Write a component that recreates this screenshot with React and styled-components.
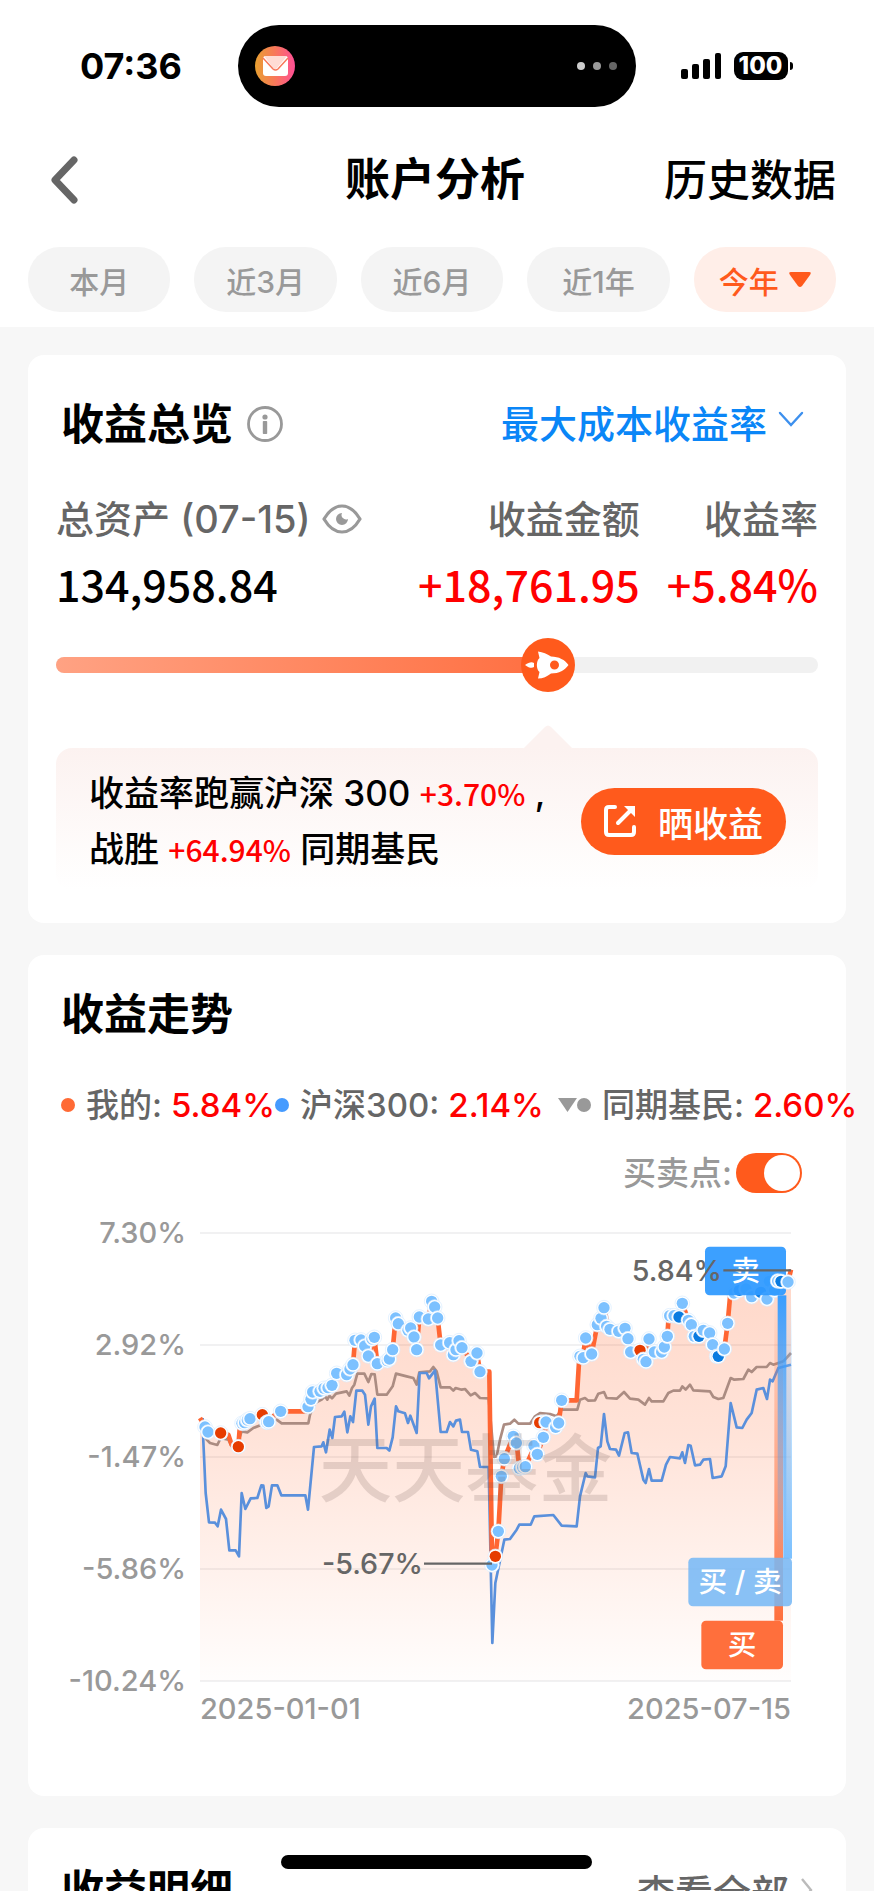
import React, { useState } from 'react';
import styled, { createGlobalStyle } from 'styled-components';

const GlobalStyle = createGlobalStyle`
  * {
    box-sizing: border-box;
  }

  body {
    margin: 0;
    background: #f7f7f7;
    font-family: Inter, 'Noto Sans CJK SC', sans-serif;
    font-weight: 500;
    color: #000;
  }

  button,
  select {
    margin: 0;
    padding: 0;
    border: 0;
    background: none;
    font-family: inherit;
    font-weight: inherit;
    cursor: pointer;
  }
`;

const Screen = styled.div`
  position: relative;
  height: 100vh;
  overflow: hidden;
`;

const Top = styled.header`
  background: #fff;
`;

const StatusBar = styled.div`
  display: grid;
  grid-template-columns: 1fr 398px 1fr;
  align-items: center;
  height: 132px;
`;

const Clock = styled.div`
  padding-left: 24px;
  text-align: center;
  font-size: 36px;
  font-weight: 700;
`;

const Island = styled.div`
  display: flex;
  align-items: center;
  justify-content: space-between;
  height: 82px;
  padding: 0 18px 0 17px;
  border-radius: 41px;
  background: #000;
`;

const Signals = styled.div`
  display: flex;
  align-items: center;
  justify-content: center;
  gap: 12px;
  padding-right: 42px;
`;

const Battery = styled.div`
  position: relative;
  width: 54px;
  height: 28px;
  border-radius: 9px;
  background: #000;
  color: #fff;
  font-size: 24px;
  font-weight: 800;
  line-height: 28px;
  text-align: center;

  &::after {
    content: '';
    position: absolute;
    right: -5px;
    top: 10px;
    width: 3px;
    height: 8px;
    border-radius: 0 4px 4px 0;
    background: #000;
  }
`;

const NavBar = styled.nav`
  display: grid;
  grid-template-columns: 1fr auto 1fr;
  align-items: center;
  height: 96px;
  padding: 0 38px 0 34px;
`;

const BackButton = styled.button`
  display: flex;
  width: 60px;
  padding-left: 16px;
`;

const PageTitle = styled.h1`
  margin: 0;
  font-size: 45px;
  font-weight: 600;
  line-height: 64px;
`;

const NavLink = styled.a`
  justify-self: end;
  color: #000;
  font-size: 43px;
  line-height: 64px;
  text-decoration: none;
`;

const Tabs = styled.div`
  display: flex;
  gap: 24px;
  padding: 19px 38px 15px 28px;
`;

const Tab = styled.button`
  display: flex;
  flex: 1;
  align-items: center;
  justify-content: center;
  gap: 10px;
  height: 65px;
  border-radius: 32px;
  background: ${props => (props.$active ? '#ffeee8' : '#f4f4f4')};
  color: ${props => (props.$active ? '#ff5a1c' : '#999')};
  font-size: 30px;
`;

const Content = styled.main`
  display: flex;
  flex-direction: column;
  gap: 32px;
  padding: 28px;
`;

const Card = styled.section`
  padding: ${props => props.$top}px 28px ${props => props.$bottom}px;
  border-radius: 16px;
  background: #fff;
`;

const CardHead = styled.div`
  display: flex;
  align-items: center;
  justify-content: space-between;
  padding: 0 ${props => (props.$wide ? 5 : 14)}px 0 5px;
`;

const CardTitle = styled.h2`
  display: flex;
  align-items: center;
  gap: 14px;
  margin: 0;
  font-size: 43px;
  font-weight: 700;
  line-height: 62px;
`;

const Picker = styled.label`
  display: flex;
  align-items: center;
  gap: 10px;
`;

const PickerSelect = styled.select`
  appearance: none;
  color: #0a86f7;
  font-size: 38px;
  line-height: 52px;
`;

const MoreLink = styled.a`
  display: flex;
  align-items: center;
  gap: 12px;
  color: #666;
  font-size: 38px;
  text-decoration: none;
`;

const Metrics = styled.div`
  display: grid;
  grid-template-columns: 1fr auto auto;
  gap: 27px;
  margin-top: 38px;
`;

const Metric = styled.div`
  display: flex;
  flex-direction: column;
  gap: 8px;
  align-items: ${props => (props.$right ? 'flex-end' : 'flex-start')};
`;

const MetricLabel = styled.div`
  display: flex;
  align-items: center;
  gap: 12px;
  color: #666;
  font-size: 38px;
  line-height: 52px;
  white-space: nowrap;
`;

const MetricValue = styled.div`
  color: ${props => (props.$up ? '#f00' : '#000')};
  font-family: 'Noto Sans CJK SC', sans-serif;
  font-size: 43px;
  line-height: 60px;
`;

const Track = styled.div`
  position: relative;
  height: 16px;
  margin-top: 44px;
  border-radius: 8px;
  background: #f1f1f1;
`;

const TrackFill = styled.div`
  height: 16px;
  border-radius: 8px;
  background: linear-gradient(90deg, #ffa283, #ff6f41);
`;

const Knob = styled.div`
  position: absolute;
  top: -19px;
  width: 54px;
  height: 54px;
  margin-left: -27px;
  border-radius: 50%;
  background: #ff5a1c;
`;

const Bubble = styled.div`
  position: relative;
  display: flex;
  align-items: center;
  justify-content: space-between;
  margin-top: 75px;
  padding: 17px 32px 13px 33px;
  border-radius: 16px;
  background: linear-gradient(#fcf2f0, #fff);
`;

const BubbleArrow = styled.svg`
  position: absolute;
  top: -23px;
  margin-left: -24px;
`;

const BubbleText = styled.p`
  margin: 0;
  font-size: 35px;
  line-height: 56px;
`;

const Up = styled.span`
  color: #f00;
  font-family: 'Noto Sans CJK SC', sans-serif;
  font-size: 30px;
  line-height: 1;
`;

const ShareButton = styled.button`
  display: flex;
  align-items: center;
  justify-content: center;
  gap: 22px;
  width: 205px;
  height: 67px;
  border-radius: 34px;
  background: #ff5a1c;
  color: #fff;
  font-size: 35px;
`;

const Legend = styled.div`
  display: flex;
  align-items: center;
  margin: 37px -28px 0 5px;
  color: #666;
  font-size: 33px;
  line-height: 46px;
  white-space: nowrap;

  svg {
    flex-shrink: 0;
  }
`;

const LegendItem = styled.div`
  display: flex;
  align-items: center;
  gap: 9px;
  margin-right: ${props => props.$after || 0}px;
`;

const Dot = styled.span`
  width: 14px;
  height: 14px;
  margin-right: 2px;
  border-radius: 50%;
  background: ${props => props.$color};
`;

const Percent = styled.span`
  color: #f00;
`;

const SwitchRow = styled.label`
  display: flex;
  align-items: center;
  justify-content: flex-end;
  gap: 4px;
  margin: 25px 16px 0 0;
  color: #999;
  font-size: 33px;
  line-height: 40px;
`;

const Switch = styled.input`
  appearance: none;
  width: 66px;
  height: 40px;
  margin: 0;
  padding: 2px;
  border-radius: 20px;
  background: ${props => (props.checked ? '#ff5a1c' : '#ccc')};
  cursor: pointer;

  &::before {
    content: '';
    display: block;
    width: 36px;
    height: 36px;
    margin-left: ${props => (props.checked ? 'auto' : 0)};
    border-radius: 50%;
    background: #fff;
  }
`;

const ChartGrid = styled.div`
  display: grid;
  grid-template-columns: 130px 1fr;
  column-gap: 14px;
  margin: 24px 27px 0 0;
  color: #999;
  font-size: 29px;
  line-height: 32px;
`;

const YAxis = styled.div`
  display: flex;
  flex-direction: column;
  justify-content: space-between;
  text-align: right;
`;

const Plot = styled.svg`
  display: block;
  width: 100%;
  margin: 16px 0;
  overflow: visible;
`;

const XAxis = styled.div`
  display: flex;
  grid-column: 2;
  justify-content: space-between;
  margin-top: -4px;
`;

const HomeBar = styled.div`
  position: absolute;
  bottom: 22px;
  left: 50%;
  width: 311px;
  height: 14px;
  margin-left: -156px;
  border-radius: 7px;
  background: #000;
`;

const progress = 64.6;

const mine = '0,555 15,580 22,597 62,600 85,605 95,635 115,641 120,575 130,568 150,558 187,545 205,566 225,545 242,535 320,535 324,521 333,499 338,477 360,473 378,465 395,457 410,421 440,425 459,395 465,322 485,325 505,369 523,313 532,392 565,378 578,350 587,255 595,272 630,285 642,312 650,350 658,252 685,258 695,205 704,222 713,255 722,336 745,330 760,355 777,322 786,344 815,385 831,360 840,416 868,416 876,990 886,970 895,895 904,730 913,677 940,610 950,630 958,705 976,702 1004,640 1012,664 1030,613 1040,568 1065,580 1076,570 1085,502 1130,502 1138,372 1148,372 1157,315 1175,363 1192,275 1203,256 1212,224 1225,283 1258,295 1275,286 1284,318 1292,357 1320,352 1338,386 1347,318 1363,357 1385,357 1393,342 1402,310 1406,250 1437,252 1447,211 1465,262 1474,275 1490,310 1510,297 1528,300 1538,335 1555,370 1573,348 1583,271 1592,170 1640,165 1655,190 1680,178 1700,198 1730,145 1764,147 1773,110';

const index300 = '8,555 10,625 17,780 27,868 45,869 53,880 63,830 78,858 88,952 107,952 117,970 125,780 136,828 152,796 172,795 184,757 190,758 199,825 206,820 216,757 232,757 244,787 316,787 324,830 342,642 365,640 370,628 378,658 389,590 397,615 405,552 425,550 433,536 442,598 451,550 459,567 469,473 487,473 495,485 505,575 513,520 524,497 532,645 560,645 568,653 578,613 588,520 595,535 615,541 624,570 631,548 650,600 659,420 680,420 687,436 705,412 722,597 740,597 750,567 760,580 768,563 780,560 786,597 804,597 813,650 832,655 840,702 866,702 877,1230 886,1050 913,920 930,918 950,890 958,875 992,875 1003,850 1060,846 1085,878 1130,880 1140,790 1157,720 1162,730 1185,733 1194,645 1202,640 1212,543 1222,625 1230,648 1248,650 1257,668 1274,600 1284,598 1295,660 1312,662 1330,740 1337,750 1347,708 1355,743 1385,743 1398,695 1410,672 1440,676 1447,658 1455,690 1465,636 1472,638 1485,697 1500,695 1510,680 1530,678 1538,735 1565,730 1577,700 1592,510 1610,583 1627,585 1640,560 1655,540 1670,470 1690,465 1701,498 1710,440 1718,445 1735,405 1773,395';

const peers = '0,580 20,620 30,630 52,636 62,615 85,620 95,640 115,625 125,595 142,598 160,585 185,575 230,560 245,571 325,571 330,545 345,510 365,500 375,490 382,500 388,488 396,496 408,482 440,475 448,488 456,465 463,455 472,422 493,422 505,447 514,423 524,424 532,485 560,485 578,460 588,422 620,430 640,435 650,455 658,418 690,415 700,402 710,415 722,463 750,463 760,473 767,465 785,470 795,468 812,487 825,480 840,495 866,496 882,672 890,670 900,620 912,575 930,572 943,560 955,572 990,572 1005,550 1020,540 1050,543 1070,550 1085,530 1132,530 1140,500 1155,495 1165,503 1185,502 1195,482 1212,477 1220,495 1250,497 1272,477 1290,497 1315,500 1335,515 1347,495 1355,505 1390,505 1405,480 1420,473 1440,473 1447,460 1457,470 1470,455 1480,472 1530,475 1540,492 1555,498 1570,495 1592,435 1603,440 1630,438 1645,410 1655,417 1670,402 1700,402 1710,390 1720,395 1750,385 1773,360';

const markerColors = { both: '#7cc1ff', buy: '#e63c00', sell: '#0a7be0' };

const markers = [
  [15, 582], [24, 597], [62, 600, 'buy'], [115, 641, 'buy'], [126, 571], [134, 569], [142, 561], [150, 557],
  [187, 545, 'buy'], [200, 568], [206, 566], [242, 535], [324, 521], [333, 499], [338, 477], [360, 475],
  [372, 466], [384, 464], [396, 457], [410, 421], [440, 425], [450, 408], [459, 395], [465, 322], [483, 321],
  [494, 339], [505, 369], [516, 318], [523, 313], [532, 392], [562, 383], [568, 378], [578, 350], [587, 255],
  [595, 272], [624, 292], [632, 285], [642, 312], [650, 350], [658, 252], [685, 258], [695, 205], [704, 222],
  [713, 255], [722, 336], [749, 329], [760, 365], [768, 350], [777, 323], [786, 344], [813, 385], [831, 360],
  [840, 416], [876, 996], [886, 970, 'buy'], [895, 895], [904, 730], [913, 677], [940, 610], [949, 630],
  [958, 706], [968, 703], [976, 701], [1002, 638], [1012, 664], [1030, 613], [1019, 569, 'buy'], [1038, 567],
  [1067, 583], [1076, 570], [1085, 502], [1140, 370], [1150, 374], [1157, 315], [1175, 363], [1192, 275],
  [1203, 256], [1212, 224], [1220, 280], [1230, 289], [1256, 295], [1275, 286], [1284, 317], [1292, 357],
  [1320, 352, 'buy'], [1330, 379], [1338, 386], [1347, 318], [1363, 357], [1385, 357], [1393, 342], [1402, 310],
  [1409, 248], [1422, 248], [1437, 252, 'sell'], [1447, 211], [1465, 262], [1474, 275], [1483, 310],
  [1497, 310, 'sell'], [1510, 292], [1529, 300], [1538, 335], [1550, 370], [1555, 370, 'sell'], [1573, 348],
  [1583, 271], [1602, 180], [1618, 172, 'sell'], [1638, 168], [1655, 191], [1682, 178, 'sell'], [1701, 198],
  [1708, 145], [1724, 172],
];

const lastMarkers = [[1733, 144], [1743, 145, 'sell'], [1764, 147]];

const Marker = ({ x, y, kind = 'both' }) => (
  <g>
    <circle cx={x} cy={y} r="22" fill="#fff" stroke="#d8ecff" strokeWidth="2" />
    <circle cx={x} cy={y} r="17" fill={markerColors[kind]} />
  </g>
);

const MailIcon = () => (
  <svg width="40" height="40" viewBox="0 0 40 40">
    <defs>
      <linearGradient id="mail">
        <stop offset="0" stopColor="#e8a030" />
        <stop offset="0.5" stopColor="#f8785a" />
        <stop offset="1" stopColor="#ff4f96" />
      </linearGradient>
    </defs>
    <circle cx="20" cy="20" r="20" fill="url(#mail)" />
    <rect x="8" y="10" width="25" height="20" rx="3" fill="#fff" />
    <path d="M9 10H32L22 22Q20 24 18 22Z" fill="#ffdcd4" />
    <path d="M8 12L18 23Q20.500 25 23 23L33 12" fill="none" stroke="#f8785a" strokeWidth="1.500" />
  </svg>
);

const SignalIcon = () => (
  <svg width="41" height="26" viewBox="0 0 41 26">
    <rect x="0" y="16" width="7" height="10" rx="2" />
    <rect x="11" y="11" width="7" height="15" rx="2" />
    <rect x="22" y="6" width="7" height="20" rx="2" />
    <rect x="34" y="0" width="6" height="26" rx="2" />
  </svg>
);

const InfoIcon = () => (
  <svg width="36" height="36" viewBox="0 0 36 36" fill="#999">
    <circle cx="18" cy="18" r="16.500" fill="none" stroke="#999" strokeWidth="2.800" />
    <circle cx="18" cy="11" r="2.600" />
    <rect x="15.800" y="15" width="4.400" height="13" rx="0.800" />
  </svg>
);

const EyeIcon = () => (
  <svg width="40" height="30" viewBox="0 0 40 30" fill="none">
    <path
      d="M2 15C7 6.500 13 2 20 2S33 6.500 38 15C33 23.500 27 28 20 28S7 23.500 2 15Z"
      stroke="#999"
      strokeWidth="3.200"
      strokeLinejoin="round"
    />
    <path d="M20 9A6 6 0 1 0 26 15A4.500 4.500 0 0 1 20 9Z" fill="#999" />
  </svg>
);

const RocketIcon = () => (
  <svg width="54" height="54" viewBox="0 0 54 54" fill="#fff">
    <path
      fillRule="evenodd"
      d="M17 13.500C22 14 26 16 30 18.500C38 18.500 44 22 47.500 27C44 32 38 35.500 30 35.500C26 38.500 22 40.500 17 40.500L18.500 34C15 31 15 23 18.500 20ZM33.500 22.500A4.500 4.500 0 1 0 33.500 31.500A4.500 4.500 0 1 0 33.500 22.500Z"
    />
    <path d="M4 27C8 24 11 23.500 13 25V29C11 30.500 8 30 4 27Z" />
  </svg>
);

const ShareIcon = () => (
  <svg width="32" height="32" viewBox="0 0 32 32" fill="none" stroke="#fff" strokeWidth="4" strokeLinecap="round">
    <path d="M11 2H5Q2 2 2 5V27Q2 30 5 30H27Q30 30 30 27V22" />
    <path d="M14 18L26 6" />
    <path d="M20 1H31V12Z" fill="#fff" stroke="none" />
  </svg>
);

const Tag = ({ x, y, width, fill, children }) => (
  <g>
    <rect x={x} y={y} width={width} height="146" rx="14" fill={fill} />
    <text x={x + width / 2} y={y + 104} fontSize="86" fontWeight="500" fill="#fff" textAnchor="middle">
      {children}
    </text>
  </g>
);

const TrendChart = ({ showMarkers }) => (
  <Plot viewBox="0 0 1773 1344">
    <defs>
      <linearGradient id="area" x1="0" y1="0" x2="0" y2="1">
        <stop offset="0" stopColor="#ff5a1c" stopOpacity="0.24" />
        <stop offset="0.4" stopColor="#ff5a1c" stopOpacity="0.17" />
        <stop offset="1" stopColor="#ff5a1c" stopOpacity="0.01" />
      </linearGradient>
      <linearGradient id="sellBar" x1="0" y1="0" x2="0" y2="1">
        <stop offset="0" stopColor="#3a9eff" />
        <stop offset="1" stopColor="#3a9eff" stopOpacity="0" />
      </linearGradient>
      <linearGradient id="bothBar" x1="0" y1="0" x2="0" y2="1">
        <stop offset="0" stopColor="#7cc1ff" stopOpacity="0" />
        <stop offset="1" stopColor="#7cc1ff" />
      </linearGradient>
      <linearGradient id="buyBar" x1="0" y1="0" x2="0" y2="1">
        <stop offset="0" stopColor="#ff6f3c" stopOpacity="0" />
        <stop offset="1" stopColor="#ff6f3c" />
      </linearGradient>
    </defs>

    {[0, 336, 672, 1008, 1344].map(y => (
      <path key={y} d={`M0 ${y}H1773`} stroke="#ececee" strokeWidth="5" />
    ))}

    <polygon points={`0,1344 ${mine} 1773,1344`} fill="url(#area)" />
    <g fill="none" strokeLinejoin="round">
      <polyline points={peers} stroke="#ab8c82" strokeWidth="8" />
      <polyline points={index300} stroke="#5a90dc" strokeWidth="8" />
      <polyline points={mine} stroke="#ff6633" strokeWidth="14" />
    </g>

    {showMarkers && markers.map(([x, y, kind], i) => <Marker key={i} x={x} y={y} kind={kind} />)}

    <text x="796" y="790" fontSize="220" fontWeight="500" fill="#6b5550" fillOpacity="0.18" textAnchor="middle">
      天天基金
    </text>

    <rect x="1723" y="190" width="26" height="973" fill="url(#buyBar)" />
    <rect x="1750" y="187" width="26" height="790" fill="url(#bothBar)" />
    <rect x="1733" y="187" width="26" height="790" fill="url(#sellBar)" />
    <Tag x={1504} y={1163} width={245} fill="#ff6f3c">买</Tag>
    <Tag x={1465} y={974} width={311} fill="rgba(118, 184, 246, 0.86)">买 / 卖</Tag>
    <Tag x={1515} y={41} width={243} fill="rgba(48, 154, 255, 0.94)">卖</Tag>
    {showMarkers && lastMarkers.map(([x, y, kind]) => <Marker key={x} x={x} y={y} kind={kind} />)}

    <path d="M1570 112H1773M672 992H876" stroke="#666" strokeWidth="7" />
    <g fontSize="86" fontWeight="500" fill="#666" textAnchor="end">
      <text x="1566" y="143">5.84%</text>
      <text x="669" y="1024">-5.67%</text>
    </g>
  </Plot>
);

const periods = ['本月', '近3月', '近6月', '近1年', '今年'];

const App = () => {
  const [period, setPeriod] = useState('今年');
  const [showMarkers, setShowMarkers] = useState(true);

  return (
    <Screen>
      <GlobalStyle />
      <Top>
        <StatusBar>
          <Clock>07:36</Clock>
          <Island>
            <MailIcon />
            <svg width="42" height="10" viewBox="0 0 42 10">
              <circle cx="5" cy="5" r="4" fill="#ccc" />
              <circle cx="21" cy="5" r="4" fill="#999" />
              <circle cx="37" cy="5" r="4" fill="#666" />
            </svg>
          </Island>
          <Signals>
            <SignalIcon />
            <Battery>100</Battery>
          </Signals>
        </StatusBar>

        <NavBar>
          <BackButton type="button" aria-label="返回">
            <svg width="28" height="48" viewBox="0 0 28 48" fill="none">
              <path d="M24 4L5 24L24 44" stroke="#666" strokeWidth="7" strokeLinecap="round" strokeLinejoin="round" />
            </svg>
          </BackButton>
          <PageTitle>账户分析</PageTitle>
          <NavLink href="#history">历史数据</NavLink>
        </NavBar>

        <Tabs>
          {periods.map(name => (
            <Tab key={name} type="button" $active={name === period} onClick={() => setPeriod(name)}>
              {name}
              {name === '今年' && (
                <svg width="22" height="16" viewBox="0 0 22 16">
                  <path d="M2 0H20Q23 0 21 3L13 14Q11 16 9 14L1 3Q-1 0 2 0Z" fill="currentColor" />
                </svg>
              )}
            </Tab>
          ))}
        </Tabs>
      </Top>

      <Content>
        <Card $top={38} $bottom={33}>
          <CardHead>
            <CardTitle>
              收益总览
              <InfoIcon />
            </CardTitle>
            <Picker>
              <PickerSelect aria-label="收益率类型">
                <option>最大成本收益率</option>
              </PickerSelect>
              <svg width="26" height="28" viewBox="0 0 26 28" fill="none">
                <path d="M2 3L13 15L24 3" stroke="#3d90ee" strokeWidth="2.400" strokeLinecap="round" />
              </svg>
            </Picker>
          </CardHead>

          <Metrics>
            <Metric>
              <MetricLabel>
                总资产 (07-15)
                <EyeIcon />
              </MetricLabel>
              <MetricValue>134,958.84</MetricValue>
            </Metric>
            <Metric $right>
              <MetricLabel>收益金额</MetricLabel>
              <MetricValue $up>+18,761.95</MetricValue>
            </Metric>
            <Metric $right>
              <MetricLabel>收益率</MetricLabel>
              <MetricValue $up>+5.84%</MetricValue>
            </Metric>
          </Metrics>

          <Track>
            <TrackFill style={{ width: `${progress}%` }} />
            <Knob style={{ left: `${progress}%` }}>
              <RocketIcon />
            </Knob>
          </Track>

          <Bubble>
            <BubbleArrow width="48" height="23" viewBox="0 0 48 23" style={{ left: `${progress}%` }}>
              <path d="M0 23L21 2Q24 -1 27 2L48 23Z" fill="#fcf2f0" />
            </BubbleArrow>
            <BubbleText>
              收益率跑赢沪深 300 <Up>+3.70%</Up> ,
              <br />
              战胜 <Up>+64.94%</Up> 同期基民
            </BubbleText>
            <ShareButton type="button">
              <ShareIcon />
              晒收益
            </ShareButton>
          </Bubble>
        </Card>

        <Card $top={28} $bottom={71}>
          <CardHead>
            <CardTitle>收益走势</CardTitle>
          </CardHead>

          <Legend>
            <LegendItem>
              <Dot $color="#ff6a35" />
              我的: <Percent>5.84%</Percent>
            </LegendItem>
            <LegendItem $after={14}>
              <Dot $color="#459bff" />
              沪深300: <Percent>2.14%</Percent>
            </LegendItem>
            <svg width="19" height="14" viewBox="0 0 19 14">
              <path d="M0 0H19L9.500 14Z" fill="#999" />
            </svg>
            <LegendItem>
              <Dot $color="#999" />
              同期基民: <Percent>2.60%</Percent>
            </LegendItem>
          </Legend>

          <SwitchRow>
            买卖点:
            <Switch type="checkbox" checked={showMarkers} onChange={e => setShowMarkers(e.target.checked)} />
          </SwitchRow>

          <ChartGrid>
            <YAxis>
              <span>7.30%</span>
              <span>2.92%</span>
              <span>-1.47%</span>
              <span>-5.86%</span>
              <span>-10.24%</span>
            </YAxis>
            <TrendChart showMarkers={showMarkers} />
            <XAxis>
              <span>2025-01-01</span>
              <span>2025-07-15</span>
            </XAxis>
          </ChartGrid>
        </Card>

        <Card $top={31} $bottom={28}>
          <CardHead $wide>
            <CardTitle>收益明细</CardTitle>
            <MoreLink href="#detail">
              查看全部
              <svg width="12" height="24" viewBox="0 0 12 24" fill="none">
                <path d="M1 1L10 12L1 23" stroke="#bbb" strokeWidth="2.400" />
              </svg>
            </MoreLink>
          </CardHead>
        </Card>
      </Content>
      <HomeBar />
    </Screen>
  );
};

export default App;
